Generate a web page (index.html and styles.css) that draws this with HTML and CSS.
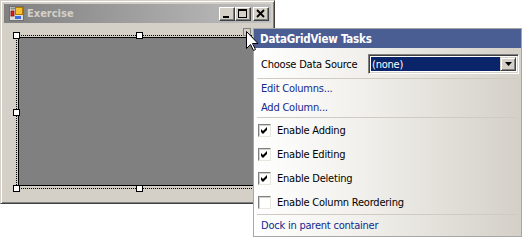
FILE: index.html
```html
<!DOCTYPE html>
<html>
<head>
<meta charset="utf-8">
<link rel="stylesheet" href="styles.css">
</head>
<body>
<div class="stage">
  <div class="window">
    <div class="titlebar">
      <svg class="appicon" width="15" height="15" viewBox="0 0 15 15">
        <rect x="0.5" y="0.5" width="14" height="14" fill="#dcdcdc" stroke="#707070"/>
        <rect x="1.5" y="1.5" width="12" height="2" fill="#8a8a8a"/>
        <rect x="2" y="5" width="3" height="5" fill="#e02020" stroke="#801010" stroke-width="0.8"/>
        <rect x="6.5" y="1.5" width="7" height="7" fill="#f6c233" stroke="#b07a00"/>
        <rect x="6" y="10" width="6" height="3" fill="#3b6fe0"/>
      </svg>
      <span class="title">Exercise</span>
      <div class="caption-buttons">
        <span class="cbtn"><svg width="14" height="12" viewBox="0 0 14 12"><rect x="3" y="8" width="6" height="2" fill="#000"/></svg></span>
        <span class="cbtn"><svg width="14" height="12" viewBox="0 0 14 12"><rect x="2.5" y="1.5" width="8" height="8" fill="none" stroke="#000"/><rect x="2" y="1" width="9" height="2" fill="#000"/></svg></span>
        <span class="cbtn close"><svg width="14" height="12" viewBox="0 0 14 12"><path d="M3 2 L10 9 M10 2 L3 9" stroke="#000" stroke-width="1.8"/></svg></span>
      </div>
    </div>
    <div class="client">
      <div class="selection">
        <div class="grid"></div>
        <span class="handle h-tl"></span>
        <span class="handle h-tm"></span>
        <span class="handle h-ml"></span>
        <span class="handle h-bl"></span>
        <span class="handle h-bm"></span>
        <span class="smarttag"></span>
      </div>
    </div>
  </div>

  <div class="tasks">
    <div class="tasks-header">DataGridView Tasks</div>
    <div class="tasks-body">
      <div class="row-source">
        <span>Choose Data Source</span>
        <div class="combo">
          <span class="combo-value">(none)</span>
          <span class="combo-btn"><svg width="7" height="4" viewBox="0 0 7 4"><path d="M0 0 H7 L3.5 4 Z" fill="#000"/></svg></span>
        </div>
      </div>
      <div class="sep"></div>
      <div class="link-row">Edit Columns...</div>
      <div class="link-row">Add Column...</div>
      <div class="sep"></div>
      <div class="check-row"><span class="checkbox checked"><svg width="9" height="9" viewBox="0 0 9 9"><path d="M1 3 L3 5 L7 1 L7 4 L3 8 L1 6 Z" fill="#000"/></svg></span>Enable Adding</div>
      <div class="check-row"><span class="checkbox checked"><svg width="9" height="9" viewBox="0 0 9 9"><path d="M1 3 L3 5 L7 1 L7 4 L3 8 L1 6 Z" fill="#000"/></svg></span>Enable Editing</div>
      <div class="check-row"><span class="checkbox checked"><svg width="9" height="9" viewBox="0 0 9 9"><path d="M1 3 L3 5 L7 1 L7 4 L3 8 L1 6 Z" fill="#000"/></svg></span>Enable Deleting</div>
      <div class="check-row"><span class="checkbox"></span>Enable Column Reordering</div>
      <div class="sep"></div>
      <div class="link-row dock">Dock in parent container</div>
    </div>
  </div>

  <svg class="cursor" width="13" height="21" viewBox="0 0 13 21">
    <path d="M0.5 0.5 V17.5 L4.5 13.5 L7.5 19.5 L9.5 18.5 L6.5 12.5 H12 Z" fill="#fff" stroke="#000" stroke-linejoin="miter"/>
  </svg>
</div>
</body>
</html>
```

FILE: styles.css
```css
* { box-sizing: border-box; }

html, body {
  margin: 0;
  padding: 0;
  background: #ffffff;
}

body {
  font-family: "DejaVu Sans", "Liberation Sans", sans-serif;
  font-stretch: condensed;
  font-size: 11px;
  letter-spacing: -0.22px;
  color: #000;
}

.stage {
  position: relative;
  width: 525px;
  height: 241px;
}

/* ---------- window ---------- */
.window {
  width: 275px;
  height: 204px;
  background: #d4d0c8;
  border: 1px solid;
  border-color: #d4d0c8 #404040 #404040 #d4d0c8;
  box-shadow: inset 1px 1px 0 #ffffff, inset -1px -1px 0 #808080;
  padding: 3px;
  display: flex;
  flex-direction: column;
}

.titlebar {
  height: 19px;
  flex: none;
  display: flex;
  align-items: center;
  padding: 0 2px 0 5px;
  background: linear-gradient(to right, #808080, #c0c0c0);
}

.appicon { flex: none; display: block; }

.title {
  margin-left: 3px;
  font-weight: bold;
  font-size: 11px;
  letter-spacing: 0;
  color: #d4d0c8;
  flex: 1;
}

.caption-buttons {
  display: flex;
  align-items: center;
}

.cbtn {
  width: 16px;
  height: 14px;
  background: #d4d0c8;
  border: 1px solid;
  border-color: #ffffff #404040 #404040 #ffffff;
  box-shadow: inset -1px -1px 0 #808080;
  display: flex;
}

.cbtn svg { display: block; }

.cbtn.close { margin-left: 2px; }

.client {
  flex: 1;
  padding: 12px 0 0 12px;
  overflow: hidden;
}

.selection {
  position: relative;
  width: 262px;
  height: 154px;
  border: 1px dotted #000;
  padding: 1px 1px 2px 1px;
}

.grid {
  height: 100%;
  background: #808080;
  border: 1px solid #000;
}

.handle {
  position: absolute;
  width: 7px;
  height: 7px;
  background: #fff;
  border: 1px solid #000;
}

.h-tl { left: -4px; top: -4px; }
.h-tm { left: 119px; top: -4px; }
.h-ml { left: -4px; top: 73px; }
.h-bl { left: -4px; bottom: -4px; }
.h-bm { left: 119px; bottom: -4px; }

.smarttag {
  position: absolute;
  left: 226px;
  top: -8px;
  width: 8px;
  height: 8px;
  background: #d4d0c8;
  border: 1px solid #808080;
}

.cursor {
  position: absolute;
  left: 246px;
  top: 31px;
}

/* ---------- tasks panel ---------- */
.tasks {
  position: absolute;
  left: 253px;
  top: 28px;
  width: 269px;
  height: 209px;
  border: 1px solid #a7a7a7;
  display: flex;
  flex-direction: column;
  background: linear-gradient(to right, #ffffff 0%, #f1f0ec 40%, #d4d0c8 100%);
}

.tasks-header {
  height: 19px;
  flex: none;
  background: #4b5e93;
  color: #ffffff;
  font-weight: bold;
  font-size: 11.5px;
  letter-spacing: -0.2px;
  display: flex;
  align-items: center;
  padding-left: 6px;
}

.tasks-body {
  display: flex;
  flex-direction: column;
}

.row-source {
  height: 30px;
  display: flex;
  align-items: center;
  justify-content: space-between;
  padding: 2px 2px 0 7px;
}

.combo {
  width: 151px;
  height: 20px;
  display: flex;
  border: 1px solid;
  border-color: #808080 #ffffff #ffffff #808080;
  box-shadow: inset 1px 1px 0 #404040, inset -1px -1px 0 #d4d0c8;
  padding: 2px;
  background: #fff;
}

.combo-value {
  flex: 1;
  background: #0a246a;
  color: #ffffff;
  display: flex;
  align-items: center;
  padding-left: 1px;
}

.combo-btn {
  width: 16px;
  flex: none;
  background: #d4d0c8;
  border: 1px solid;
  border-color: #d4d0c8 #404040 #404040 #d4d0c8;
  box-shadow: inset 1px 1px 0 #ffffff, inset -1px -1px 0 #808080;
  display: flex;
  align-items: center;
  justify-content: center;
}

.combo-btn svg { display: block; }

.sep {
  height: 1px;
  margin: 0 3px 0 3px;
  background: #cfcbc3;
}

.link-row {
  height: 19px;
  display: flex;
  align-items: center;
  padding-left: 7px;
  color: #122a8c;
}

.link-row.dock { height: 21px; }

.check-row {
  height: 24px;
  display: flex;
  align-items: center;
  padding-left: 4px;
  gap: 6px;
}

.checkbox {
  width: 13px;
  height: 13px;
  flex: none;
  background: #ffffff;
  border: 1px solid;
  border-color: #808080 #e8e6e1 #e8e6e1 #808080;
  box-shadow: inset 1px 1px 0 #d4d0c8;
  display: flex;
  align-items: center;
  justify-content: center;
}

.checkbox svg { display: block; }
```
